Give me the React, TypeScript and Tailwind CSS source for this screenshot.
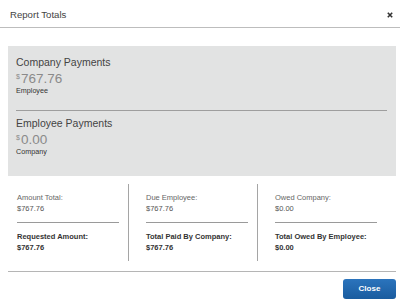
import React from 'react'

const font = { fontFamily: '"Liberation Sans", Arial, sans-serif' }

function Section({ title, amount, sub }: { title: string; amount: string; sub: string }) {
  return (
    <div>
      <div className="text-[10.5px] leading-[12px] text-[#444]">{title}</div>
      <div className="mt-[4px] flex items-start text-[13.5px] leading-[14px] text-[#8a8a8a]">
        <span className="text-[7px] leading-[10px] mr-[1px]">$</span>
        <span>{amount}</span>
      </div>
      <div className="text-[7.2px] leading-[9px] text-[#333]">{sub}</div>
    </div>
  )
}

function Column({ label, value, boldLabel, boldValue }: { label: string; value: string; boldLabel: string; boldValue: string }) {
  return (
    <div className="w-[102px] py-[8px] text-[7.5px] leading-[11px]">
      <div className="text-[#666]">{label}</div>
      <div className="text-[#555]">{value}</div>
      <div className="my-[8px] h-px bg-[#9a9a9a]" />
      <div className="font-bold text-[#333]">{boldLabel}</div>
      <div className="font-bold text-[#333]">{boldValue}</div>
    </div>
  )
}

export default function App() {
  return (
    <div className="w-[400px] h-[303px] bg-white overflow-hidden" style={font}>
      {/* Header */}
      <div className="h-[28px] border-b border-[#bdbdbd] flex items-start justify-between pl-[10px] pr-[7px] pt-[9px]">
        <span className="text-[9.6px] leading-[12px] text-[#444]">Report Totals</span>
        <svg width="6" height="6" viewBox="0 0 6 6" className="mt-[3px]">
          <path d="M0.8 0.8 L5.2 5.2 M5.2 0.8 L0.8 5.2" stroke="#333" strokeWidth="1.6" />
        </svg>
      </div>

      <div className="pl-[8px] pr-[4px] pt-[18px]">
        {/* Gray totals panel */}
        <div className="bg-[#e2e3e3] pl-[8px] pr-[9px] pt-[10px] pb-[20px]">
          <Section title="Company Payments" amount="767.76" sub="Employee" />
          <div className="mt-[15px] mb-[6px] h-px bg-[#9e9e9e]" />
          <Section title="Employee Payments" amount="0.00" sub="Company" />
        </div>

        {/* Breakdown columns */}
        <div className="flex pt-[8px] pb-[10px] border-b border-[#b5b5b5]">
          <div className="pl-[9px] pr-[9px]">
            <Column label="Amount Total:" value="$767.76" boldLabel="Requested Amount:" boldValue="$767.76" />
          </div>
          <div className="w-px bg-[#a5a5a5]" />
          <div className="pl-[17px] pr-[9px]">
            <Column label="Due Employee:" value="$767.76" boldLabel="Total Paid By Company:" boldValue="$767.76" />
          </div>
          <div className="w-px bg-[#a5a5a5]" />
          <div className="pl-[17px]">
            <Column label="Owed Company:" value="$0.00" boldLabel="Total Owed By Employee:" boldValue="$0.00" />
          </div>
        </div>

        {/* Footer */}
        <div className="flex justify-end pt-[7px]">
          <button className="w-[53px] h-[20px] rounded-[3px] bg-gradient-to-b from-[#2b74bd] to-[#1a5c9f] text-white text-[8px] font-bold">
            Close
          </button>
        </div>
      </div>
    </div>
  )
}
